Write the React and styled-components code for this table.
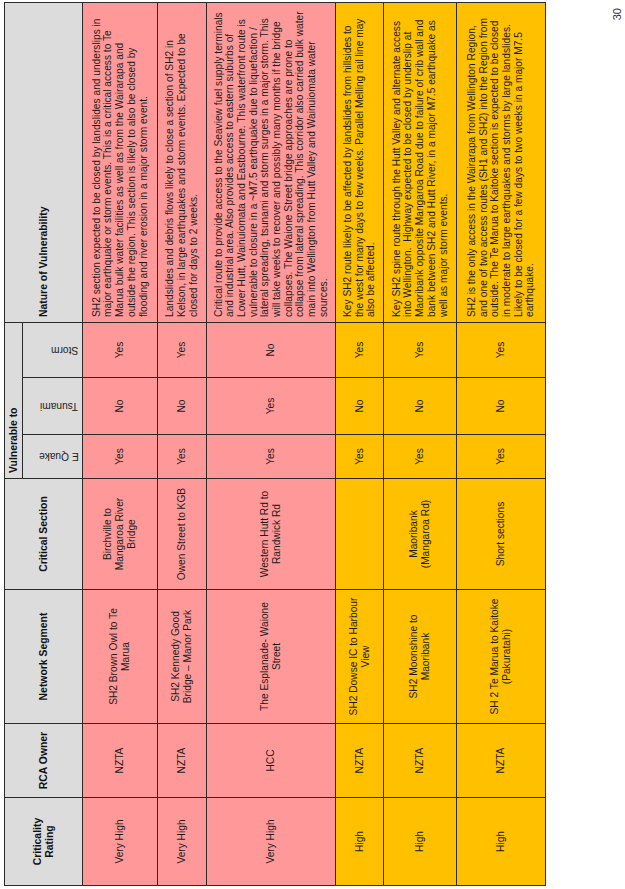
import styled, { createGlobalStyle } from 'styled-components'

const GlobalStyle = createGlobalStyle`
  html, body {
    margin: 0;
    padding: 0;
    background: #fff;
    overflow: hidden;
  }
  body {
    font-family: "Liberation Sans", Arial, sans-serif;
  }
`

const COLS = [88, 74, 134, 111, 44, 57, 55, 320]

const FILL = {
  pink: '#ff9999',
  gold: '#ffc000',
  head: '#dcdcdc',
}

const ROWS = [
  {
    h: 75,
    tone: 'pink',
    rating: 'Very High',
    owner: 'NZTA',
    segment: ['SH2 Brown Owl to Te', 'Marua'],
    section: ['Birchville to', 'Mangaroa River', 'Bridge'],
    quake: 'Yes',
    tsunami: 'No',
    storm: 'Yes',
    nature: [
      'SH2 section expected to be closed by landslides and underslips in',
      'major earthquake or storm events. This is a critical access to Te',
      'Marua bulk water facilities as well as from the Wairarapa and',
      'outside the region. This section is likely to also be closed by',
      'flooding and river erosion in a major storm event.',
    ],
  },
  {
    h: 49,
    tone: 'pink',
    rating: 'Very High',
    owner: 'NZTA',
    segment: ['SH2 Kennedy Good', 'Bridge \u2013 Manor Park'],
    section: ['Owen Street to KGB'],
    quake: 'Yes',
    tsunami: 'No',
    storm: 'Yes',
    nature: [
      'Landslides and debris flows likely to close a section of SH2 in',
      'Kelson, in large earthquakes and storm events. Expected to be',
      'closed for days to 2 weeks.',
    ],
  },
  {
    h: 129,
    tone: 'pink',
    rating: 'Very High',
    owner: 'HCC',
    segment: ['The Esplanade- Waione', 'Street'],
    section: ['Western Hutt Rd to', 'Randwick Rd'],
    quake: 'Yes',
    tsunami: 'Yes',
    storm: 'No',
    nature: [
      'Critical route to provide access to the Seaview fuel supply terminals',
      'and industrial area. Also provides access to eastern suburbs of',
      'Lower Hutt, Wainuiomata and Eastbourne. This waterfront route is',
      'vulnerable to closure in a ~M7.5 earthquake due to liquefaction /',
      'lateral spreading, tsunami and storm surges in a major storm. This',
      'will take weeks to recover and possibly many months if the bridge',
      'collapses. The Waione Street bridge approaches are prone to',
      'collapse from lateral spreading. This corridor also carried bulk water',
      'main into Wellington from Hutt Valley and Wainuiomata water',
      'sources.',
    ],
  },
  {
    h: 48,
    tone: 'gold',
    rating: 'High',
    owner: 'NZTA',
    segment: ['SH2 Dowse IC to Harbour', 'View'],
    section: [''],
    quake: 'Yes',
    tsunami: 'No',
    storm: 'Yes',
    nature: [
      'Key SH2 route likely to be affected by landslides from hillsides to',
      'the west for many days to few weeks. Parallel Melling rail line may',
      'also be affected.',
    ],
  },
  {
    h: 73,
    tone: 'gold',
    rating: 'High',
    owner: 'NZTA',
    segment: ['SH2 Moonshine to', 'Maoribank'],
    section: ['Maoribank', '(Mangaroa Rd)'],
    quake: 'Yes',
    tsunami: 'No',
    storm: 'Yes',
    nature: [
      'Key SH2 spine route through the Hutt Valley and alternate access',
      'into Wellington.\u00a0 Highway expected to be closed by underslip at',
      'Maoribank opposite Mangaroa Road due to failure of crib wall and',
      'bank between SH2 and Hutt River, in a major M7.5 earthquake as',
      'well as major storm events.',
    ],
  },
  {
    h: 89,
    tone: 'gold',
    rating: 'High',
    owner: 'NZTA',
    segment: ['SH 2 Te Marua to Kaitoke', '(Pakuratahi)'],
    section: ['Short sections'],
    quake: 'Yes',
    tsunami: 'No',
    storm: 'Yes',
    nature: [
      'SH2 is the only access in the Wairarapa from Wellington Region,',
      'and one of two access routes (SH1 and SH2) into the Region from',
      'outside. The Te Marua to Kaitoke section is expected to be closed',
      'in moderate to large earthquakes and storms by large landslides.',
      'Likely to be closed for a few days to two weeks in a major M7.5',
      'earthquake.',
    ],
  },
]

function Lines({ lines }) {
  return lines.map((line, idx) => (
    <span key={idx}>
      {idx > 0 && <br />}
      {line}
    </span>
  ))
}

export default function App() {
  return (
    <>
      <GlobalStyle />
      <Viewport>
        <Page>
          <Table>
            <colgroup>
              {COLS.map((w, idx) => (
                <col key={idx} style={{ width: w }} />
              ))}
            </colgroup>
            <thead>
              <Row $h={18}>
                <HeadCell rowSpan={2}>Criticality<br />Rating</HeadCell>
                <HeadCell rowSpan={2}>RCA Owner</HeadCell>
                <HeadCell rowSpan={2}>Network Segment</HeadCell>
                <HeadCell rowSpan={2}>Critical Section</HeadCell>
                <GroupCell colSpan={3}>Vulnerable to</GroupCell>
                <HeadCell rowSpan={2} $left>Nature of Vulnerability</HeadCell>
              </Row>
              <Row $h={60}>
                <SubHead><Turned>E Quake</Turned></SubHead>
                <SubHead><Turned>Tsunami</Turned></SubHead>
                <SubHead><Turned>Storm</Turned></SubHead>
              </Row>
            </thead>
            <tbody>
              {ROWS.map((row, idx) => (
                <Row key={idx} $h={row.h}>
                  <Cell $tone={row.tone}>{row.rating}</Cell>
                  <Cell $tone={row.tone}>{row.owner}</Cell>
                  <Cell $tone={row.tone}><Lines lines={row.segment} /></Cell>
                  <Cell $tone={row.tone}><Lines lines={row.section} /></Cell>
                  <Cell $tone={row.tone}>{row.quake}</Cell>
                  <Cell $tone={row.tone}>{row.tsunami}</Cell>
                  <Cell $tone={row.tone}>{row.storm}</Cell>
                  <Cell $tone={row.tone} $left><Lines lines={row.nature} /></Cell>
                </Row>
              ))}
            </tbody>
          </Table>
          <PageNumber>30</PageNumber>
        </Page>
      </Viewport>
    </>
  )
}

const Viewport = styled.div`
  width: 625px;
  height: 889px;
  overflow: hidden;
`

// the printed page is landscape, turned a quarter to fit the portrait sheet
const Page = styled.div`
  width: 889px;
  height: 625px;
  box-sizing: border-box;
  padding: 4px 0 0 3px;
  display: flex;
  flex-direction: column;
  transform-origin: top left;
  transform: translateY(889px) rotate(-90deg);
`

const Table = styled.table`
  width: 883px;
  border-collapse: collapse;
  table-layout: fixed;
  border: 1px solid #2a2a2a;
  color: #1c1c1c;
  font-size: 10.2px;
  line-height: 11.67px;
`

const Row = styled.tr`
  height: ${p => p.$h}px;
`

const HeadCell = styled.th`
  background: ${FILL.head};
  border: 1px solid #2a2a2a;
  font-size: 10.4px;
  font-weight: bold;
  color: #111;
  text-align: ${p => (p.$left ? 'left' : 'center')};
  vertical-align: middle;
  padding: 0 5px;
`

const GroupCell = styled.th`
  background: ${FILL.head};
  border: 1px solid #2a2a2a;
  font-size: 10.4px;
  font-weight: bold;
  color: #111;
  text-align: left;
  vertical-align: middle;
  padding: 0 5px;
`

const SubHead = styled.th`
  background: ${FILL.head};
  border: 1px solid #2a2a2a;
  font-weight: normal;
  color: #1c1c1c;
  text-align: center;
  vertical-align: bottom;
  padding: 0 0 1px;
`

const Turned = styled.span`
  display: inline-block;
  writing-mode: vertical-rl;
  transform: rotate(180deg);
  white-space: nowrap;
`

const Cell = styled.td`
  background: ${p => FILL[p.$tone]};
  border: 1px solid #2a2a2a;
  text-align: ${p => (p.$left ? 'left' : 'center')};
  vertical-align: middle;
  white-space: nowrap;
  padding: 0 5px;
`

const PageNumber = styled.div`
  margin-top: auto;
  align-self: flex-end;
  padding: 0 8px 2px 0;
  font-size: 11px;
  color: #333;
`
